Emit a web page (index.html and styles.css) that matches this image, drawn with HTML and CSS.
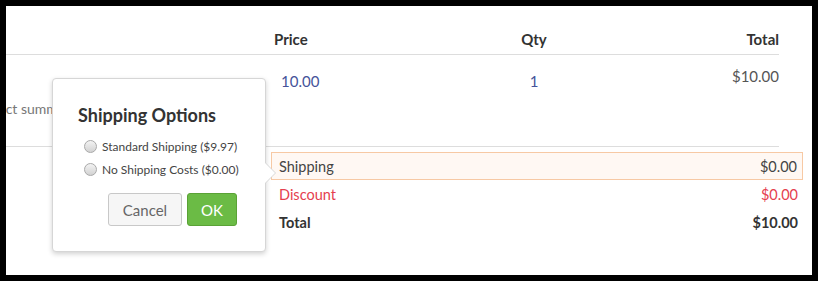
FILE: index.html
```html
<!DOCTYPE html>
<html>
<head>
<meta charset="utf-8">
<link rel="stylesheet" href="styles.css">
</head>
<body>
<div class="frame">
  <div class="cart">
    <div class="row head">
      <div class="c-prod"></div>
      <div class="c-price">Price</div>
      <div class="c-qty">Qty</div>
      <div class="c-total">Total</div>
    </div>
    <div class="row item">
      <div class="c-prod"><span class="summary">Product summary</span></div>
      <div class="c-price val">10.00</div>
      <div class="c-qty val">1</div>
      <div class="c-total amount">$10.00</div>
    </div>
  </div>
  <div class="totals">
    <div class="trow shipping"><span>Shipping</span><span>$0.00</span></div>
    <div class="trow discount"><span>Discount</span><span>$0.00</span></div>
    <div class="trow grand"><span>Total</span><span>$10.00</span></div>
  </div>

  <div class="popover">
    <div class="pop-title">Shipping Options</div>
    <label class="opt"><span class="radio"></span>Standard Shipping ($9.97)</label>
    <label class="opt"><span class="radio"></span>No Shipping Costs ($0.00)</label>
    <div class="actions">
      <button class="btn cancel">Cancel</button>
      <button class="btn ok">OK</button>
    </div>
  </div>
</div>
</body>
</html>
```

FILE: styles.css
```css
html, body {
  margin: 0;
  padding: 0;
  background: #000;
  height: 281px;
  overflow: hidden;
}
.frame {
  margin: 6px 0 0 6px;
  width: 806px;
  height: 269px;
  background: #fff;
  position: relative;
  overflow: hidden;
  font-family: "Lato", "Liberation Sans", sans-serif;
  color: #444;
}
.cart {
  width: 773px;
}
.row {
  display: grid;
  grid-template-columns: 268px 200px 120px 185px;
}
.head {
  padding: 24px 0 6px;
  line-height: 18px;
  font-size: 15px;
  font-weight: 700;
  color: #333;
  border-bottom: 1px solid #ddd;
}
.c-qty { text-align: center; }
.c-total { text-align: right; }
.item {
  height: 91px;
  border-bottom: 1px solid #ddd;
  font-size: 15px;
  line-height: 18px;
}
.item .val {
  padding-top: 17px;
  color: #45539a;
}
.item .c-price { padding-left: 7px; }
.item .amount {
  padding-top: 12px;
  color: #555;
}
.c-prod { overflow: hidden; }
.summary {
  display: block;
  white-space: nowrap;
  margin-left: -37px;
  margin-top: 45px;
  font-size: 14px;
  color: #777;
}
.totals {
  margin: 5px 0 0 265px;
  width: 532px;
}
.trow {
  display: flex;
  justify-content: space-between;
  height: 28px;
  align-items: center;
  padding: 0 5px 0 8px;
  font-size: 14.5px;
  box-sizing: border-box;
}
.shipping {
  background: #fff8f3;
  border: 1px solid #f7c9a4;
  padding-left: 7px;
  color: #444;
}
.discount { color: #e5404e; }
.grand {
  font-weight: 700;
  color: #333;
}
.popover {
  position: absolute;
  left: 46px;
  top: 72px;
  width: 214px;
  height: 174px;
  box-sizing: border-box;
  background: #fff;
  border: 1px solid #d6d6d6;
  border-radius: 4px;
  box-shadow: 0 2px 5px rgba(0,0,0,0.18);
  padding: 25px 10px 0 25px;
}
.popover::before,
.popover::after {
  content: "";
  position: absolute;
  top: 83px;
  border-style: solid;
  border-color: transparent;
}
.popover::before {
  right: -11px;
  border-width: 11px 0 11px 11px;
  border-left-color: #d6d6d6;
}
.popover::after {
  right: -10px;
  top: 84px;
  border-width: 10px 0 10px 10px;
  border-left-color: #fff;
}
.pop-title {
  font-size: 18px;
  font-weight: 700;
  line-height: 22px;
  color: #333;
  margin-bottom: 9px;
}
.opt {
  display: flex;
  align-items: center;
  height: 23px;
  font-size: 12px;
  color: #444;
  padding-left: 6px;
  white-space: nowrap;
}
.radio {
  width: 11px;
  height: 11px;
  border-radius: 50%;
  border: 1px solid #a9a9a9;
  background: linear-gradient(#f3f3f3, #d2d2d2);
  margin-right: 5px;
  flex: none;
}
.actions {
  display: flex;
  justify-content: flex-end;
  gap: 5px;
  margin-top: 12px;
  padding-right: 18px;
}
.btn {
  height: 33px;
  border-radius: 3px;
  font-family: "Lato", "Liberation Sans", sans-serif;
  font-size: 15px;
  cursor: pointer;
}
.cancel {
  width: 74px;
  background: #f6f6f6;
  border: 1px solid #c8c8c8;
  color: #666;
}
.ok {
  width: 50px;
  background: #6bbb45;
  border: 1px solid #5aa236;
  color: #fff;
}
```
